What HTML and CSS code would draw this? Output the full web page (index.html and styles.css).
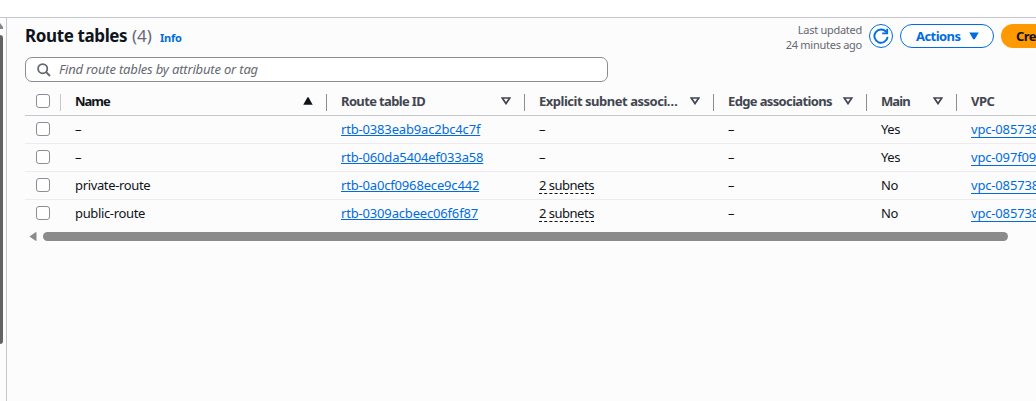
FILE: index.html
```html
<!DOCTYPE html>
<html lang="en">
<head>
<meta charset="utf-8">
<title>Route tables</title>
<link rel="stylesheet" href="styles.css">
</head>
<body>
<div class="topbar"></div>
<div class="shell">
  <aside class="side">
    <svg class="side-arrow" width="3" height="6" viewBox="0 0 3 6"><path d="M0 0L3 4V6H0Z" fill="#858585"/></svg>
    <div class="side-thumb"></div>
  </aside>
  <main class="panel">
    <header class="head">
      <h1 class="title">Route tables</h1><span class="count">(4)</span><a class="info">Info</a>
      <div class="updated"><span>Last updated</span><span>24 minutes ago</span></div>
      <button class="refresh" aria-label="Refresh"><svg width="16" height="16" viewBox="0 0 16 16" fill="none" stroke="#006ce0" stroke-width="1.9"><path d="M14.6 8.8A6.6 6.6 0 1 1 13.4 4.3"/><path d="M14.2 0.8V5.4H9.2"/></svg></button>
      <button class="actions"><span>Actions</span><svg width="10" height="8" viewBox="0 0 10 8"><path d="M0.3 0.5H9.7L5.8 7.3H4.2Z" fill="#006ce0"/></svg></button>
      <button class="create">Cre</button>
    </header>
    <div class="search">
      <svg width="14" height="14" viewBox="0 0 14 14" fill="none" stroke="#656871" stroke-width="1.8"><circle cx="5.7" cy="5.7" r="4.6"/><path d="M9 9L13 13"/></svg>
      <span>Find route tables by attribute or tag</span>
    </div>
    <div class="table">
      <div class="row header">
        <div class="cell pick"><i class="box"></i></div>
        <div class="cell sorted"><b class="h-name">Name</b><svg width="10" height="8" viewBox="0 0 10 8"><path d="M0.3 7.7H9.7L5.5 0.3H4.5Z" fill="#0f141a"/></svg></div>
        <div class="cell"><b class="h-id">Route table ID</b><svg class="sort" viewBox="0 0 10 8"><path d="M1.2 1H8.8L5 6.6Z"/></svg></div>
        <div class="cell"><b class="h-sub">Explicit subnet associ…</b><svg class="sort" viewBox="0 0 10 8"><path d="M1.2 1H8.8L5 6.6Z"/></svg></div>
        <div class="cell"><b class="h-edge">Edge associations</b><svg class="sort" viewBox="0 0 10 8"><path d="M1.2 1H8.8L5 6.6Z"/></svg></div>
        <div class="cell"><b class="h-main">Main</b><svg class="sort" viewBox="0 0 10 8"><path d="M1.2 1H8.8L5 6.6Z"/></svg></div>
        <div class="cell"><b class="h-vpc">VPC</b></div>
      </div>
      <div class="row"><div class="cell pick"><i class="box"></i></div><div class="cell">–</div><div class="cell"><a class="link">rtb-0383eab9ac2bc4c7f</a></div><div class="cell">–</div><div class="cell">–</div><div class="cell yn">Yes</div><div class="cell"><a class="link vpc">vpc-085738</a></div></div>
      <div class="row"><div class="cell pick"><i class="box"></i></div><div class="cell">–</div><div class="cell"><a class="link">rtb-060da5404ef033a58</a></div><div class="cell">–</div><div class="cell">–</div><div class="cell yn">Yes</div><div class="cell"><a class="link vpc">vpc-097f09</a></div></div>
      <div class="row"><div class="cell pick"><i class="box"></i></div><div class="cell"><span class="name">private-route</span></div><div class="cell"><a class="link">rtb-0a0cf0968ece9c442</a></div><div class="cell"><span class="subnets">2 subnets</span></div><div class="cell">–</div><div class="cell yn">No</div><div class="cell"><a class="link vpc">vpc-085738</a></div></div>
      <div class="row"><div class="cell pick"><i class="box"></i></div><div class="cell"><span class="name">public-route</span></div><div class="cell"><a class="link">rtb-0309acbeec06f6f87</a></div><div class="cell"><span class="subnets">2 subnets</span></div><div class="cell">–</div><div class="cell yn">No</div><div class="cell"><a class="link vpc">vpc-085738</a></div></div>
    </div>
    <div class="scroll">
      <svg width="8" height="9" viewBox="0 0 8 9"><path d="M0.5 4.5L6.5 0.3H7.5V8.7H6.5Z" fill="#8b8b8b"/></svg>
      <div class="thumb"></div>
    </div>
  </main>
</div>
</body>
</html>
```
FILE: styles.css
```css
* { box-sizing: border-box; }
body {
  margin: 0;
  height: 401px;
  overflow: hidden;
  background: #fcfcfd;
  color: #0f141a;
  font: 13px/18px "Noto Sans", "Open Sans", sans-serif;
  white-space: nowrap;
}
.topbar { height: 18px; background: #fff; border-bottom: 1px solid #c6c6cd; }
.shell { display: flex; height: 383px; }
.side { width: 7px; flex: none; border-right: 1px solid #c6c6cd; padding-top: 5px; }
.side-arrow { display: block; }
.side-thumb { width: 3px; height: 309px; margin-top: 6px; background: #636363; border-radius: 0 3px 3px 0; }
.panel { flex: 1; min-width: 0; padding: 6px 0 0 18px; overflow: hidden; }

.head { display: flex; height: 24px; align-items: center; }
.title { margin: 0; font-size: 17px; line-height: 24px; font-weight: 700; letter-spacing: -0.38px; width: 107px; }
.count { font-size: 17px; line-height: 24px; color: #656871; width: 28px; }
.info { font-size: 11px; font-weight: 700; color: #006ce0; padding-top: 4px; letter-spacing: -0.2px; }
.updated { margin-left: auto; display: flex; flex-direction: column; align-items: flex-end; font-size: 11px; line-height: 15px; color: #656871; padding-top: 2px; letter-spacing: -0.27px; }
button { flex: none; font: 700 13px/20px "Noto Sans", "Open Sans", sans-serif; height: 24px; padding: 0; border-radius: 12px; border: 1.5px solid #006ce0; background: #fff; color: #006ce0; }
.refresh { width: 24px; margin-left: 7px; display: flex; align-items: center; justify-content: center; }
.actions { width: 94px; margin-left: 7px; display: flex; align-items: center; padding-left: 15px; gap: 9px; }
.actions span { width: 44px; letter-spacing: -0.55px; padding-bottom: 1px; }
.create { width: 35px; margin-left: 7px; padding: 0 0 1px 15px; border: 0; border-radius: 12px 0 0 12px; background: #ff9900; color: #0f141a; text-align: left; letter-spacing: -0.6px; }

.search { width: 583px; height: 25px; margin-top: 9px; border: 1px solid #8c8c94; border-radius: 7px; background: #fff; display: flex; align-items: center; padding-left: 11px; gap: 8px; color: #656871; font-style: italic; }
.search span { letter-spacing: -0.18px; padding-bottom: 2px; }

.table { margin-top: 6px; width: 1011px; }
.row { display: grid; grid-template-columns: 36px 266px 198px 189px 153px 90px 79px; height: 28px; border-bottom: 1px solid #ebebf0; }
.row:last-child { border-color: transparent; }
.cell { display: flex; align-items: center; padding: 0 0 1px 14px; letter-spacing: -0.2px; }
.row .pick { padding-left: 11px; padding-right: 0; }
.box { flex: none; width: 14px; height: 14px; border: 1px solid #8c8c94; border-radius: 3px; background: #fff; }
.header { border-color: #c6c6cd; color: #424650; }
.header .cell { justify-content: space-between; padding-right: 14px; background: linear-gradient(#8c8c94, #8c8c94) right 6px / 1px 17px no-repeat; }
.header .cell:last-child { background: none; }
.header .pick { background-image: linear-gradient(#c6c6cd, #c6c6cd); }
.header b { letter-spacing: -0.48px; }
.header .h-id { letter-spacing: -0.64px; }
.header .h-name { letter-spacing: -1px; }
.header .h-edge { letter-spacing: -0.64px; }
.header .h-main { letter-spacing: -0.9px; }
.header .sorted { color: #0f141a; }
.sort { flex: none; width: 10px; height: 8px; fill: none; stroke: #424650; stroke-width: 1.7; }
.name { letter-spacing: -0.35px; }
.yn { letter-spacing: -0.4px; }
.link { color: #006ce0; line-height: 18px; letter-spacing: -0.17px; text-decoration: underline; text-decoration-thickness: 1px; text-underline-offset: 1px; }
.vpc { line-height: 16px; text-decoration: none; border-bottom: 1px solid #006ce0; margin-top: 1px; }
.subnets { line-height: 16px; border-bottom: 1px dashed #0f141a; letter-spacing: -0.5px; margin-top: 1px; }

.scroll { display: flex; align-items: center; height: 9px; margin-top: 4px; padding-left: 4px; gap: 6px; }
.thumb { width: 965px; height: 9px; border-radius: 5px; background: #8b8b8b; }
```
